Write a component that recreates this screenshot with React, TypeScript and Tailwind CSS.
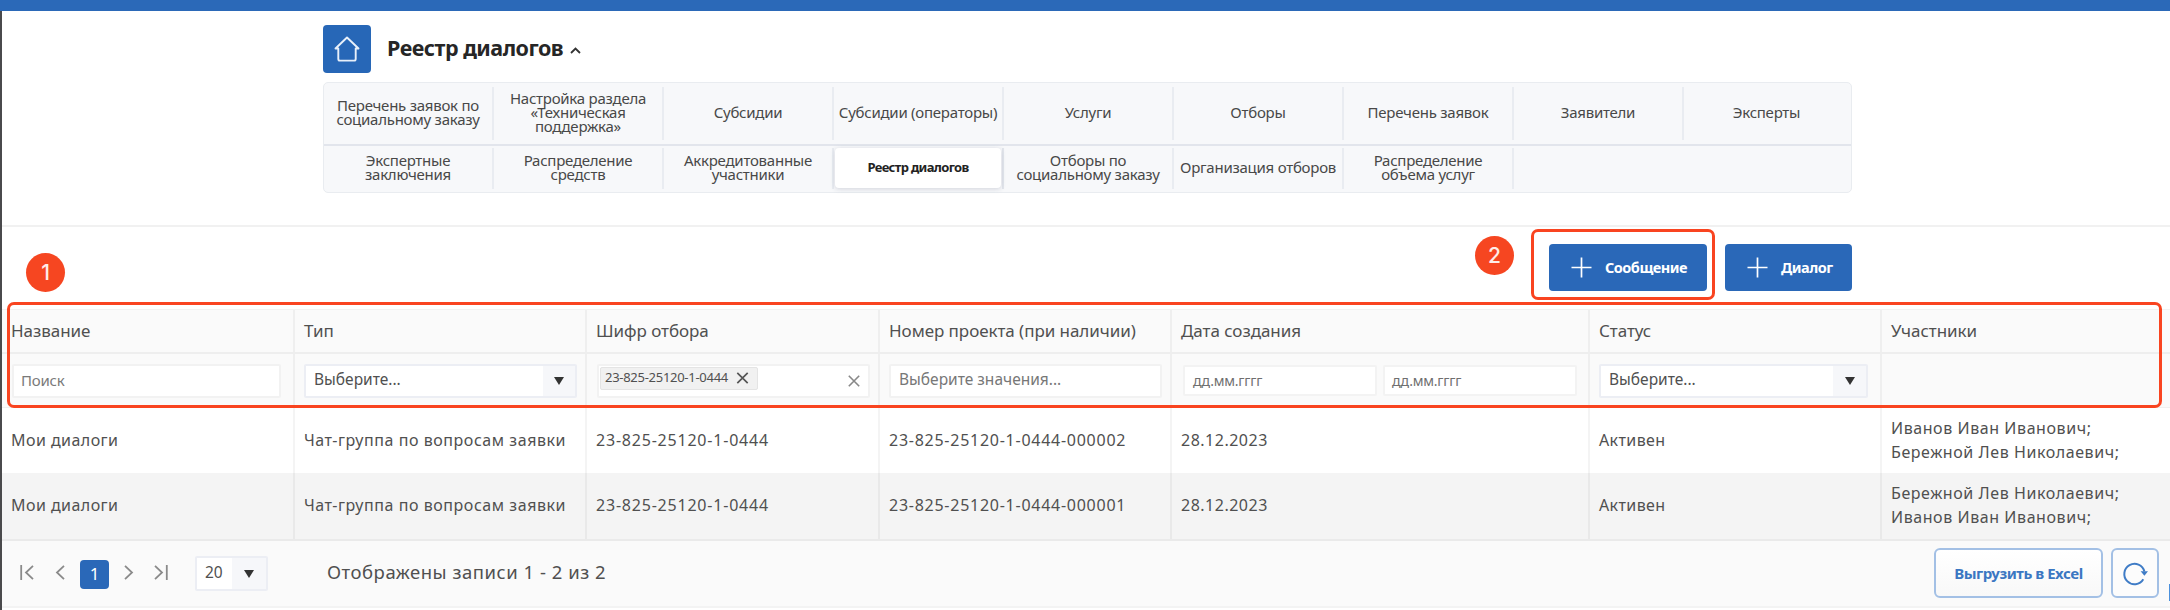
import type { ReactNode } from "react";

const NAV_TOP = [
  ["Перечень заявок по", "социальному заказу"],
  ["Настройка раздела", "«Техническая", "поддержка»"],
  ["Субсидии"],
  ["Субсидии (операторы)"],
  ["Услуги"],
  ["Отборы"],
  ["Перечень заявок"],
  ["Заявители"],
  ["Эксперты"],
];

const NAV_BOTTOM = [
  ["Экспертные", "заключения"],
  ["Распределение", "средств"],
  ["Аккредитованные", "участники"],
  ["Реестр диалогов"],
  ["Отборы по", "социальному заказу"],
  ["Организация отборов"],
  ["Распределение", "объема услуг"],
];

const ROWS = [
  { project: "23-825-25120-1-0444-000002", people: ["Иванов Иван Иванович;", "Бережной Лев Николаевич;"] },
  { project: "23-825-25120-1-0444-000001", people: ["Бережной Лев Николаевич;", "Иванов Иван Иванович;"] },
];

const GRID = "grid grid-cols-[293px_292px_293px_292px_418px_292px_1fr]";

function NavCell({ lines, active = false }: { lines: string[]; active?: boolean }) {
  if (active) {
    return (
      <div className="flex w-[170px] border-r-2 border-[#e3e6ec] pr-[1px] pb-[1px] pl-[1px]">
        <div className="flex grow items-center justify-center rounded-[4px] bg-white text-[13px] font-bold tracking-[-0.66px] text-[#222] shadow-[0_1px_5px_rgba(60,70,100,0.2)]">
          {lines[0]}
        </div>
      </div>
    );
  }
  return (
    <div className="flex w-[170px] flex-col items-center justify-center border-r-2 border-[#e9ecf1] pb-[3px] text-[15px] leading-[14px] tracking-[-0.25px] whitespace-nowrap text-[#484848]">
      {lines.map((l) => (
        <span key={l}>{l}</span>
      ))}
    </div>
  );
}

function Cell({ children, last = false, className = "" }: { children?: ReactNode; last?: boolean; className?: string }) {
  return (
    <div className={`flex items-center pl-[9px] ${last ? "" : "border-r-2 border-black/[0.045]"} ${className}`}>{children}</div>
  );
}

function Caret() {
  return (
    <svg className="h-[8px] w-[10px]" viewBox="0 0 10 8">
      <path d="M0 0h10L5 8z" fill="#333" />
    </svg>
  );
}

function Select({ text, className, arrow }: { text: string; className: string; arrow: string }) {
  return (
    <div className={`flex rounded-[2px] border-2 border-[#eceef4] bg-white ${className}`}>
      <span className="flex grow items-center pb-[2px] pl-[8px] text-[#505050]">{text}</span>
      <span className={`flex items-center justify-center bg-[#f6f7fa] ${arrow}`}>
        <Caret />
      </span>
    </div>
  );
}

function Cross({ className }: { className: string }) {
  return (
    <svg className={className} viewBox="0 0 12 12" fill="none" stroke="currentColor">
      <path d="M0.8 0.8l10.4 10.4M11.2 0.8L0.8 11.2" />
    </svg>
  );
}

function Plus() {
  return (
    <svg className="h-[21px] w-[21px]" viewBox="0 0 21 21" fill="none" stroke="#fff" strokeWidth="1.7">
      <path d="M10.5 0.5v20M0.5 10.5h20" />
    </svg>
  );
}

function PagerIcon({ d, className }: { d: string; className: string }) {
  return (
    <svg className={`mb-[3px] h-[15px] ${className}`} viewBox="0 0 14 15" preserveAspectRatio="xMinYMid meet" fill="none" stroke="#8a8a8a" strokeWidth="1.8">
      <path d={d} />
    </svg>
  );
}

export default function App() {
  return (
    <div className="relative h-[610px] w-[2170px] overflow-hidden bg-white font-['Noto_Sans',sans-serif] text-[#505050]">
      <header className="h-[11px] bg-[#2b69b8]" />
      <main className="flex h-[599px] flex-col border-l-2 border-[#4a4a4c]">
        <div className="ml-[321px] flex h-[71px] items-start pt-[14px]">
          <div className="flex h-[48px] w-[48px] items-center justify-center rounded-[4px] bg-[#2767b7]">
            <svg className="h-[26px] w-[26px]" viewBox="0 0 26 26" fill="none" stroke="#e8f0fa" strokeWidth="1.9" strokeLinejoin="round" strokeLinecap="round">
              <path d="M13 1.5L24.5 12.5H21.7V23a1.6 1.6 0 0 1-1.6 1.6H5.9A1.6 1.6 0 0 1 4.3 23V12.5H1.5z" />
            </svg>
          </div>
          <h1 className="ml-[16px] w-[176px] text-[21.5px] leading-[46px] font-bold tracking-[-0.5px] whitespace-nowrap text-[#262626]">Реестр диалогов</h1>
          <svg className="mt-[22px] ml-[7px] h-[7px] w-[11px]" viewBox="0 0 11 7" fill="none" stroke="#333" strokeWidth="1.8">
            <path d="M1 6l4.5-4.5L10 6" />
          </svg>
        </div>

        <nav className="ml-[321px] flex h-[111px] w-[1529px] flex-col rounded-[5px] border-[1.5px] border-[#e9ecf0] bg-[#f7f8fa]">
          <div className="flex h-[63px] border-b-2 border-[#e2e5ec] pt-[4px] pb-[4px] [&>div:last-child]:w-[165px] [&>div:last-child]:border-r-0">
            {NAV_TOP.map((l) => (
              <NavCell key={l[0]} lines={l} />
            ))}
          </div>
          <div className="flex grow pt-[2px] pb-[3px]">
            {NAV_BOTTOM.map((l) => (
              <NavCell key={l.join()} lines={l} active={l[0] === "Реестр диалогов"} />
            ))}
          </div>
        </nav>

        <div className="mt-[32px] flex h-[84px] items-start gap-[18px] border-t-2 border-[#f1f1f1] pt-[17px] pl-[1547px] text-[14.5px] font-bold tracking-[-0.5px] text-white">
          <button className="flex h-[47px] w-[158px] items-center rounded-[4px] bg-[#2a68b8] pl-[22px]">
            <Plus />
            <span className="ml-[13px]">Сообщение</span>
          </button>
          <button className="flex h-[47px] w-[127px] items-center rounded-[4px] bg-[#2a68b8] pl-[22px]">
            <Plus />
            <span className="ml-[13px]">Диалог</span>
          </button>
        </div>

        <section className="flex flex-col">
          <div className={`${GRID} h-[45px] border-t border-b-2 border-t-[#f2f2f2] border-b-[#eeeeee] bg-[#fafafa] text-[17px] tracking-[-0.05px]`}>
            <Cell>Название</Cell>
            <Cell>Тип</Cell>
            <Cell>Шифр отбора</Cell>
            <Cell>Номер проекта (при наличии)</Cell>
            <Cell>Дата создания</Cell>
            <Cell>Статус</Cell>
            <Cell last>Участники</Cell>
          </div>
          <div className={`${GRID} h-[54px] border-b border-[#f0f0f0] bg-[#fafafa] text-[15.5px]`}>
            <Cell>
              <div className="ml-px flex h-[34px] w-[269px] items-center rounded-[2px] border-2 border-[#f2f2f2] bg-white pl-[7px] text-[15px] tracking-[-0.2px] text-[#7a7a7a]">Поиск</div>
            </Cell>
            <Cell>
              <Select text="Выберите..." className="h-[34px] w-[273px]" arrow="w-[32px]" />
            </Cell>
            <Cell>
              <div className="ml-px flex h-[34px] w-[273px] items-start rounded-[2px] border-2 border-[#f2f2f2] bg-white pt-[1px] pr-[8px] pl-[1px]">
                <div className="flex h-[23px] w-[158px] items-center gap-[7px] rounded-[2px] border border-[#e4e4e4] bg-[#f1f1f1] pl-[4px]">
                  <span className="w-[124px] pb-[2px] text-[13px] leading-[19px] tracking-[-0.28px] whitespace-nowrap">23-825-25120-1-0444</span>
                  <Cross className="h-[12px] w-[13px] stroke-[1.7] text-[#555]" />
                </div>
                <Cross className="mt-[8px] ml-auto h-[12px] w-[12px] stroke-[1.6] text-[#888]" />
              </div>
            </Cell>
            <Cell>
              <div className="flex h-[34px] w-[273px] items-center rounded-[2px] border-2 border-[#f2f2f2] bg-white pb-[2px] pl-[8px] text-[#777]">Выберите значения...</div>
            </Cell>
            <Cell className="gap-[6px]">
              <div className="ml-[2px] flex h-[31px] w-[194px] items-center rounded-[2px] border-2 border-[#f3f3f3] bg-white pb-px pl-[8px] text-[14px] tracking-[-0.2px] text-[#6f6f6f]">дд.мм.гггг</div>
              <div className="flex h-[31px] w-[194px] items-center rounded-[2px] border-2 border-[#f3f3f3] bg-white pb-px pl-[7px] text-[14px] tracking-[-0.2px] text-[#6f6f6f]">дд.мм.гггг</div>
            </Cell>
            <Cell>
              <Select text="Выберите..." className="h-[34px] w-[269px]" arrow="w-[33px]" />
            </Cell>
            <Cell last />
          </div>
          {ROWS.map((r, i) => (
            <div key={r.project} className={`${GRID} text-[16px] leading-[24px] ${i ? "h-[68px] border-b-2 border-[#eaeaea] bg-[#f4f4f4]" : "h-[65px] bg-white"}`}>
              <Cell className="pb-[2px] tracking-[0.45px]">Мои диалоги</Cell>
              <Cell className="pb-[2px] tracking-[0.55px]">Чат-группа по вопросам заявки</Cell>
              <Cell className="pb-[2px] tracking-[0.79px]">23-825-25120-1-0444</Cell>
              <Cell className="pb-[2px] tracking-[0.74px]">{r.project}</Cell>
              <Cell className="pb-[2px] tracking-[0.5px]">28.12.2023</Cell>
              <Cell className="pb-[2px] tracking-[0.4px]">Активен</Cell>
              <Cell last className="flex-col items-start! justify-center pb-[2px] tracking-[0.57px]">
                {r.people.map((p) => (
                  <span key={p}>{p}</span>
                ))}
              </Cell>
            </div>
          ))}
        </section>

        <footer className="flex h-[67px] items-start border-b-2 border-[#f3f3f3] bg-[#fafafa]">
          <div className="mt-[18px] flex h-[30px] items-center pl-[18px]">
            <PagerIcon d="M1.2 0v15M13 0.8L6 7.5l7 6.7" className="w-[14px]" />
            <PagerIcon d="M9 0.8L2 7.5l7 6.7" className="ml-[21px] w-[14px]" />
            <span className="ml-[11px] flex h-[29px] w-[29px] items-center justify-center rounded-[4px] bg-[#2a68b8] pb-px text-[17px] leading-none text-white">1</span>
            <PagerIcon d="M1 0.8l7 6.7-7 6.7" className="ml-[15px] w-[14px]" />
            <PagerIcon d="M1 0.8l7 6.7-7 6.7M12.8 0v15" className="ml-[16px] w-[14px]" />
          </div>
          <Select text="20" className="mt-[15px] ml-[27px] h-[35px] w-[73px] text-[15.5px]" arrow="w-[34px]" />
          <span className="ml-[59px] w-[290px] pt-[11px] text-[18.5px] leading-[40px] tracking-[0.52px] whitespace-nowrap">Отображены записи 1 - 2 из 2</span>
          <button className="mt-[7px] ml-[1317px] flex h-[50px] w-[169px] items-center justify-center rounded-[6px] border-2 border-[#a3c0e5] bg-gradient-to-b from-white to-[#f8f8f8] text-[15px] font-bold tracking-[-0.47px] whitespace-nowrap text-[#3b77c2]">
            Выгрузить в Excel
          </button>
          <button className="mt-[7px] ml-[8px] flex h-[50px] w-[48px] items-center justify-center rounded-[6px] border-2 border-[#a3c0e5] bg-[#fcfcfc]">
            <svg className="h-[25px] w-[26px]" viewBox="0 0 26 25" fill="none" stroke="#3f7cc6" strokeWidth="2">
              <path d="M21.3 18.2A10.2 10.2 0 1 1 22.4 10.5" />
              <path d="M18.6 10.2h7.4l-3.6 4.6z" fill="#3f7cc6" stroke="none" />
            </svg>
          </button>
        </footer>
      </main>

      <div className="absolute top-[584px] left-[2169px] h-[17px] w-[1px] bg-[#4a90dc]" />
      <div className="absolute top-[302px] left-[7px] h-[106px] w-[2155px] rounded-[7px] border-3 border-[#f94420]" />
      <div className="absolute top-[229px] left-[1531px] h-[71px] w-[184px] rounded-[7px] border-3 border-[#f94420]" />
      <div className="absolute top-[253px] left-[26px] flex h-[39px] w-[39px] items-center justify-center rounded-full bg-[#f64621] font-['Inter',sans-serif] text-[21px] font-medium text-white/90">1</div>
      <div className="absolute top-[236px] left-[1475px] flex h-[39px] w-[39px] items-center justify-center rounded-full bg-[#f64621] font-['Inter',sans-serif] text-[21px] font-medium text-white/90">2</div>
    </div>
  );
}
